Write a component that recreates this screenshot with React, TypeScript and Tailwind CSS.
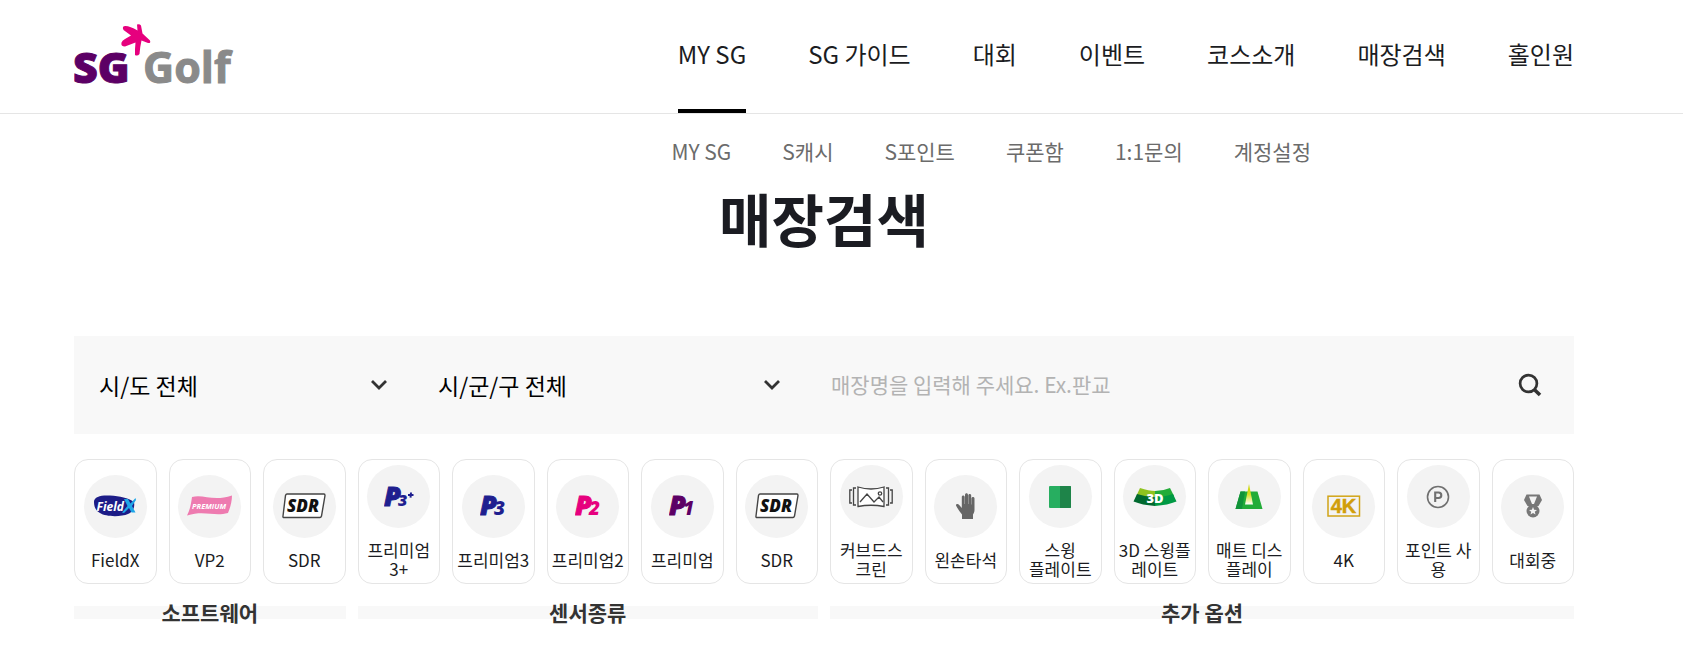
import type { ReactNode } from 'react';

const navItems = ['MY SG', 'SG 가이드', '대회', '이벤트', '코스소개', '매장검색', '홀인원'];
const subItems = ['MY SG', 'S캐시', 'S포인트', '쿠폰함', '1:1문의', '계정설정'];

function Logo() {
  return (
    <svg width="160" height="66" viewBox="0 0 160 66" role="img" aria-label="SG Golf" className="block">
      <g fontFamily="'Open Sans', 'Noto Sans', sans-serif" fontWeight="800" strokeWidth="1">
        <text x="-1" y="62" fontSize="43" fill="#5c0065" stroke="#5c0065">SG</text>
        <text x="69" y="62" fontSize="43" fill="#8a8a8a" stroke="#8a8a8a" fontWeight="700">Golf</text>
      </g>
      <path
        d="M63 3.500 Q65.500 2.500 67 4.500 L68.500 12.500 L76 19.500 Q77 22.500 74 22 L67.500 19.500 Q66 26 65.500 33 Q63.500 35.500 61 34 Q60.800 28 61.500 21.500 L51 25.500 Q46.500 25.500 47.500 21.500 Q48 19.500 51 18 L57 14.500 L49.500 9 Q47.500 5 51.500 5 Q56 5 63.500 9.500 Z"
        fill="#e6007e"
      />
    </svg>
  );
}

function Chevron() {
  return (
    <svg
      width="16"
      height="12"
      viewBox="0 0 16 12"
      fill="none"
      stroke="#333"
      strokeWidth="2.8"
      className="pointer-events-none absolute right-0 top-1/2 -translate-y-1/2"
    >
      <path d="M1 2 L8 9 L15 2" />
    </svg>
  );
}

const italic = {
  fontFamily: "'Open Sans', 'Noto Sans', sans-serif",
  fontStyle: 'italic',
  fontWeight: 800,
} as const;

function FieldX() {
  return (
    <svg width="44" height="24" viewBox="0 0 44 24">
      <path d="M1 8 C1 2 9 1 17 1.500 C27 2 35 4 41 8 C42 13 40 18 35 20 C28 23 13 23 7 19 C3 17 1 13 1 8Z" fill="#1c1c87" />
      <path d="M31 5 L35 5 L37.500 9.500 L42.500 4 L43 6 L39 12 L42.500 18.500 L38.500 18.500 L36 14 L31 19 L29 18.500 L34.500 12Z" fill="#1fa6e8" />
      <text x="3.500" y="17" fontSize="12" fill="#fff" fontFamily="'Noto Sans', sans-serif" fontStyle="italic" fontWeight="700">
        Field
      </text>
    </svg>
  );
}

function Premium() {
  return (
    <svg width="48" height="24" viewBox="0 0 48 24">
      <path d="M6 3 C18 0 27 8 46 1.500 C46 8 44 14 42 19 C28 23 19 16 1 21.500 C4 16 5 10 6 3Z" fill="#ee7bb0" />
      <text x="6" y="15" fontSize="7.500" fill="#fff" {...italic} fontWeight={700}>PREMIUM</text>
    </svg>
  );
}

function Sdr() {
  return (
    <svg width="44" height="26" viewBox="0 0 44 26">
      <path d="M5 1 H42 Q43 1 43 2.500 L39.500 23 Q39 24.500 38 24.500 H1.500 Q.8 24.500 1 23 L3.500 2.500 Q4 1 5 1Z" fill="#fff" stroke="#444" strokeWidth="1.400" />
      <text x="5" y="19" fontSize="17" fill="#111" {...italic}>SDR</text>
    </svg>
  );
}

function PMark({ n, color, plus }: { n: string; color: string; plus?: boolean }) {
  return (
    <svg width={plus ? 30 : 26} height="26" viewBox={plus ? '0 0 30 26' : '0 0 26 26'} fill={color}>
      <text x="0" y="22" fontSize="27" {...italic} stroke={color} strokeWidth="1">P</text>
      <text x="14" y="22" fontSize={plus ? 16 : 19} {...italic}>{n}</text>
      {plus && <path d="M24 11 H29.500 M27 8.500 L26.500 13.700" stroke={color} strokeWidth="2" />}
    </svg>
  );
}

function Curved() {
  return (
    <svg width="44" height="24" viewBox="0 0 44 24" fill="none" stroke="#444" strokeWidth="1.300">
      <path d="M9 2 Q22 6 35 2 V21.500 Q22 19 9 21.500Z" fill="#fff" />
      <path d="M11 17 L18 9 L25 17 L30 12 L34 17 M7 3 H4.500 V20 H7 M37 3 H39.500 V20 H37 M3 5 H.8 V18 H3 M41 5 H43.200 V18 H41" />
      <circle cx="31" cy="8.500" r="1.700" />
    </svg>
  );
}

function Hand() {
  return (
    <svg width="22" height="28" viewBox="0 0 22 28" fill="#666">
      <path d="M7 27 V22.500 C5 20 2.500 16.500 1 13.500 C.8 12 3 11.500 4.200 13 L6.800 16 V5 C6.800 3 9.500 3 9.700 5 V12 H10 V3 C10 .8 13 .8 13 3 V12 H13.300 V3.500 C13.300 1.500 16.200 1.500 16.200 3.500 V12.500 H16.500 V6.500 C16.500 4.500 19.500 4.500 19.500 6.500 V18 C19.500 20 18.500 21.500 18 22.500 V27Z" />
    </svg>
  );
}

function Plate() {
  return (
    <svg width="24" height="24" viewBox="0 0 24 24">
      <rect x="1" y="1" width="22" height="22" rx="1" fill="#27ae60" />
      <path d="M12 1 H22 Q23 1 23 2 V22 Q23 23 22 23 H12Z" fill="#1e8449" />
    </svg>
  );
}

function Plate3D() {
  return (
    <svg width="44" height="20" viewBox="0 0 44 20">
      <path d="M7 1 Q16 4 22 4 V11 Q11 11 3.500 8.500Z" fill="#8fc31f" />
      <path d="M22 4 Q30 4 37 1 L41 9 Q32 11 22 11Z" fill="#22ac38" />
      <path d="M4 7 Q13 10 22 10 V19 Q9 18 .5 14.500Z" fill="#00692f" />
      <path d="M22 10 Q32 10 40 7 L43.500 14.500 Q35 18 22 19Z" fill="#009944" />
      <text x="22" y="15.500" fontSize="13" textAnchor="middle" fill="#fff" fontFamily="'Open Sans', sans-serif" fontWeight="800">3D</text>
    </svg>
  );
}

function Mat() {
  return (
    <svg width="28" height="26" viewBox="0 0 28 26">
      <defs>
        <linearGradient id="beam" x1="0" y1="0" x2="0" y2="1">
          <stop offset="0" stopColor="#c8d400" />
          <stop offset=".5" stopColor="#d8de20" />
          <stop offset="1" stopColor="#fff" />
        </linearGradient>
      </defs>
      <path d="M5.500 7.500 H22.500 L27.500 25 H.5Z" fill="#22ac38" />
      <path d="M5.500 7.500 H10 L7 25 H.5Z" fill="#119339" />
      <path d="M14 0 L18 20.500 H10Z" fill="url(#beam)" />
    </svg>
  );
}

function FourK() {
  return (
    <svg width="34" height="22" viewBox="0 0 34 22">
      <rect x="1" y="1.200" width="31.500" height="19.800" fill="none" stroke="#d1a417" strokeWidth="1.500" />
      <text x="16.500" y="17.800" fontSize="20" textAnchor="middle" fill="#d19e0b" stroke="#d19e0b" strokeWidth=".5" fontFamily="'Liberation Sans', Arial, sans-serif" fontWeight="700">4K</text>
    </svg>
  );
}

function Point() {
  return (
    <svg width="24" height="24" viewBox="0 0 24 24" fill="none" stroke="#707070">
      <circle cx="12" cy="12" r="10.500" strokeWidth="1.600" />
      <path d="M9.200 17 V7.500 H12.500 Q15.300 7.500 15.300 10.200 T12.500 13 H9.200" strokeWidth="2.100" />
    </svg>
  );
}

function Medal() {
  return (
    <svg width="20" height="24" viewBox="0 0 20 24">
      <path d="M3.500 .5 H16.500 L19 6 L15.500 12 H4.500 L1 6Z" fill="#777" />
      <path d="M6 2.500 H14 L11 10 H9Z" fill="#f3f3f3" />
      <circle cx="10" cy="17" r="6.500" fill="#777" />
      <path d="M10 13 L11.100 15.700 L14 15.900 L11.800 17.700 L12.500 20.500 L10 19 L7.500 20.500 L8.200 17.700 L6 15.900 L8.900 15.700Z" fill="#f3f3f3" />
    </svg>
  );
}

type Option = { label: ReactNode; icon: ReactNode };
type Group = { title: string; span: string; options: Option[] };

const groups: Group[] = [
  {
    title: '소프트웨어',
    span: 'col-span-3',
    options: [
      { label: 'FieldX', icon: <FieldX /> },
      { label: 'VP2', icon: <Premium /> },
      { label: 'SDR', icon: <Sdr /> },
    ],
  },
  {
    title: '센서종류',
    span: 'col-span-5',
    options: [
      { label: <>프리미엄<br />3+</>, icon: <PMark n="3" color="#1f1f8f" plus /> },
      { label: '프리미엄3', icon: <PMark n="3" color="#1f1f8f" /> },
      { label: '프리미엄2', icon: <PMark n="2" color="#e6007e" /> },
      { label: '프리미엄', icon: <PMark n="1" color="#5c0065" /> },
      { label: 'SDR', icon: <Sdr /> },
    ],
  },
  {
    title: '추가 옵션',
    span: 'col-span-8',
    options: [
      { label: <>커브드스<br />크린</>, icon: <Curved /> },
      { label: '왼손타석', icon: <Hand /> },
      { label: <>스윙<br />플레이트</>, icon: <Plate /> },
      { label: <>3D 스윙플<br />레이트</>, icon: <Plate3D /> },
      { label: <>매트 디스<br />플레이</>, icon: <Mat /> },
      { label: '4K', icon: <FourK /> },
      { label: <>포인트 사<br />용</>, icon: <Point /> },
      { label: '대회중', icon: <Medal /> },
    ],
  },
];

export default function App() {
  return (
    <div className="bg-white font-['Noto_Sans_CJK_KR',sans-serif] text-[#1b1c22]">
      <header className="border-b border-[#e5e5e5] pr-[35px]">
        <div className="mx-auto flex h-[113px] max-w-[1500px] justify-between">
          <a href="#home" className="pt-[21px]">
            <Logo />
          </a>
          <nav aria-label="주 메뉴" className="flex gap-[62px]">
            {navItems.map((item, i) => (
              <a
                key={item}
                href="#menu"
                className={
                  i === 0
                    ? 'whitespace-nowrap border-b-4 border-black pt-9 text-[24px] leading-9'
                    : 'whitespace-nowrap border-b-4 border-transparent pt-9 text-[24px] leading-9'
                }
              >
                {item}
              </a>
            ))}
          </nav>
        </div>
      </header>
      <main className="pb-8 pr-[35px]">
        <div className="mx-auto max-w-[1500px]">
          <nav aria-label="하위 메뉴" className="flex h-16 items-center justify-end gap-[51px] pr-[263px] pt-3 text-[21px] text-[#6b6b6b]">
            {subItems.map((item) => (
              <a key={item} href="#sub" className="whitespace-nowrap">
                {item}
              </a>
            ))}
          </nav>
          <h1 className="text-center text-[57px] font-bold leading-[78px]">매장검색</h1>
          <form className="mt-20 flex h-[98px] items-stretch gap-[51px] bg-[#f8f8f8] pl-[25px] pr-8 text-[22px] text-black">
            <div className="relative w-[288px]">
              <select aria-label="시/도" className="h-full w-full appearance-none bg-transparent text-[23px] outline-none">
                <option>시/도 전체</option>
              </select>
              <Chevron />
            </div>
            <div className="relative w-[342px]">
              <select aria-label="시/군/구" className="h-full w-full appearance-none bg-transparent text-[23px] outline-none">
                <option>시/군/구 전체</option>
              </select>
              <Chevron />
            </div>
            <input
              aria-label="매장명"
              placeholder="매장명을 입력해 주세요. Ex.판교"
              className="min-w-0 flex-1 bg-transparent text-[21px] outline-none placeholder:text-[#b3b3b3]"
            />
            <button type="button" aria-label="검색">
              <svg width="24" height="24" viewBox="0 0 24 24" fill="none" stroke="#333">
                <circle cx="10.500" cy="10.500" r="8.400" strokeWidth="2.700" />
                <path d="M16.800 17 L22 22" strokeWidth="3.600" />
              </svg>
            </button>
          </form>
          <div className="mt-[25px] grid grid-cols-16 gap-x-3">
            {groups.map((group) => (
              <section key={group.title} className={`${group.span} grid grid-cols-subgrid`}>
                {group.options.map((option, i) => (
                  <button
                    key={i}
                    type="button"
                    className="flex h-[125px] min-w-0 flex-col items-center justify-center gap-3 rounded-[14px] border border-[#e5e5e5] bg-white"
                  >
                    <span className="flex size-[63px] shrink-0 items-center justify-center rounded-full bg-[#f3f3f3]">
                      {option.icon}
                    </span>
                    <span className="whitespace-nowrap text-center text-[17px] leading-[19px]">{option.label}</span>
                  </button>
                ))}
                <h2 className="col-span-full mt-[22px] h-[13px] bg-[#f8f8f8] text-center text-[21px] font-bold leading-[13px] text-[#333]">
                  {group.title}
                </h2>
              </section>
            ))}
          </div>
        </div>
      </main>
    </div>
  );
}
